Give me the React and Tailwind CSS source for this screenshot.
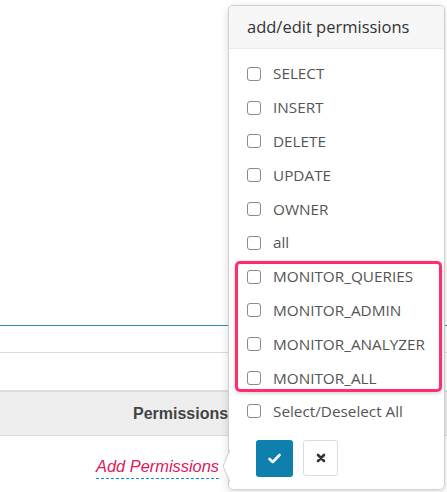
import React from "react";

const perms = [
  "SELECT",
  "INSERT",
  "DELETE",
  "UPDATE",
  "OWNER",
  "all",
  "MONITOR_QUERIES",
  "MONITOR_ADMIN",
  "MONITOR_ANALYZER",
  "MONITOR_ALL",
];

function Box() {
  return (
    <span className="block w-[14px] h-[14px] rounded-[3px] border border-[#8a8a8a] bg-white shrink-0" />
  );
}

export default function App() {
  return (
    <div className="relative w-[447px] h-[492px] overflow-hidden bg-white font-['Liberation_Sans',Arial,sans-serif]">
      {/* table behind the popover */}
      <div className="h-[325px]" />
      <div className="h-[1px] bg-[#2a8cc4]" />
      <div className="h-[27px] border-b border-[#dcdcdc]" />
      <div className="h-[39px] border-b-2 border-[#dcdcdc]" />
      <div className="h-[44px] bg-[#eeeeee] border-b border-[#dcdcdc] flex items-center pl-[133px]">
        <span className="text-[16px] font-bold text-[#444] whitespace-nowrap">Permissions</span>
      </div>
      <div className="h-[56px] flex items-start pt-[19px] pl-[96px]">
        <span className="italic text-[16.4px] text-[#e0185c] leading-[22px] pb-[1px] border-b border-dashed border-[#1a8ad4]">
          Add Permissions
        </span>
      </div>

      {/* popover */}
      <div className="absolute left-[228px] top-[5px] w-[217px] h-[485px] bg-white border border-[#d0d0d0] rounded-[5px] shadow-[0_2px_8px_rgba(0,0,0,0.15)] font-['Open_Sans',sans-serif]">
        <div className="h-[43px] bg-[#f7f7f7] border-b border-[#ebebeb] rounded-t-[5px] flex items-center pl-[18px] text-[16.5px] text-[#333]">
          add/edit permissions
        </div>
        <div className="pt-[8px]">
          {perms.map((p) => (
            <div key={p} className="h-[33.8px] flex items-center gap-[12px] pl-[18px] text-[15.3px] text-[#555]">
              <Box />
              <span>{p}</span>
            </div>
          ))}
          <div className="h-[33px] flex items-center gap-[12px] pl-[18px] text-[15.3px] text-[#555]">
            <Box />
            <span>Select/Deselect All</span>
          </div>
        </div>
        <div className="flex gap-[10px] pl-[27px] pt-[12px]">
          <button className="w-[37px] h-[37px] rounded-[3px] bg-[#0f7fae] flex items-center justify-center">
            <svg width="13" height="11" viewBox="0 0 13 11">
              <path d="M1.5 6 L4.8 9 L11.5 2" fill="none" stroke="#fff" strokeWidth="2.6" strokeLinecap="round" strokeLinejoin="round" />
            </svg>
          </button>
          <button className="w-[35px] h-[36px] rounded-[3px] bg-white border border-[#dcdcdc] flex items-center justify-center">
            <svg width="10" height="10" viewBox="0 0 10 10">
              <path d="M2 2 L8 8 M8 2 L2 8" fill="none" stroke="#333" strokeWidth="2.6" strokeLinecap="round" />
            </svg>
          </button>
        </div>
        {/* arrow */}
        <svg className="absolute left-[-7px] top-[443px]" width="8" height="34" viewBox="0 0 8 34">
          <path d="M8 1 L1 17 L8 33" fill="#fff" stroke="#cfcfcf" strokeWidth="1" />
        </svg>
      </div>

      {/* annotation */}
      <div className="absolute left-[235px] top-[261px] w-[207px] h-[131px] border-[3px] border-[#ff2d6b] rounded-[5px] shadow-[0_1px_4px_rgba(0,0,0,0.2)]" />
    </div>
  );
}
